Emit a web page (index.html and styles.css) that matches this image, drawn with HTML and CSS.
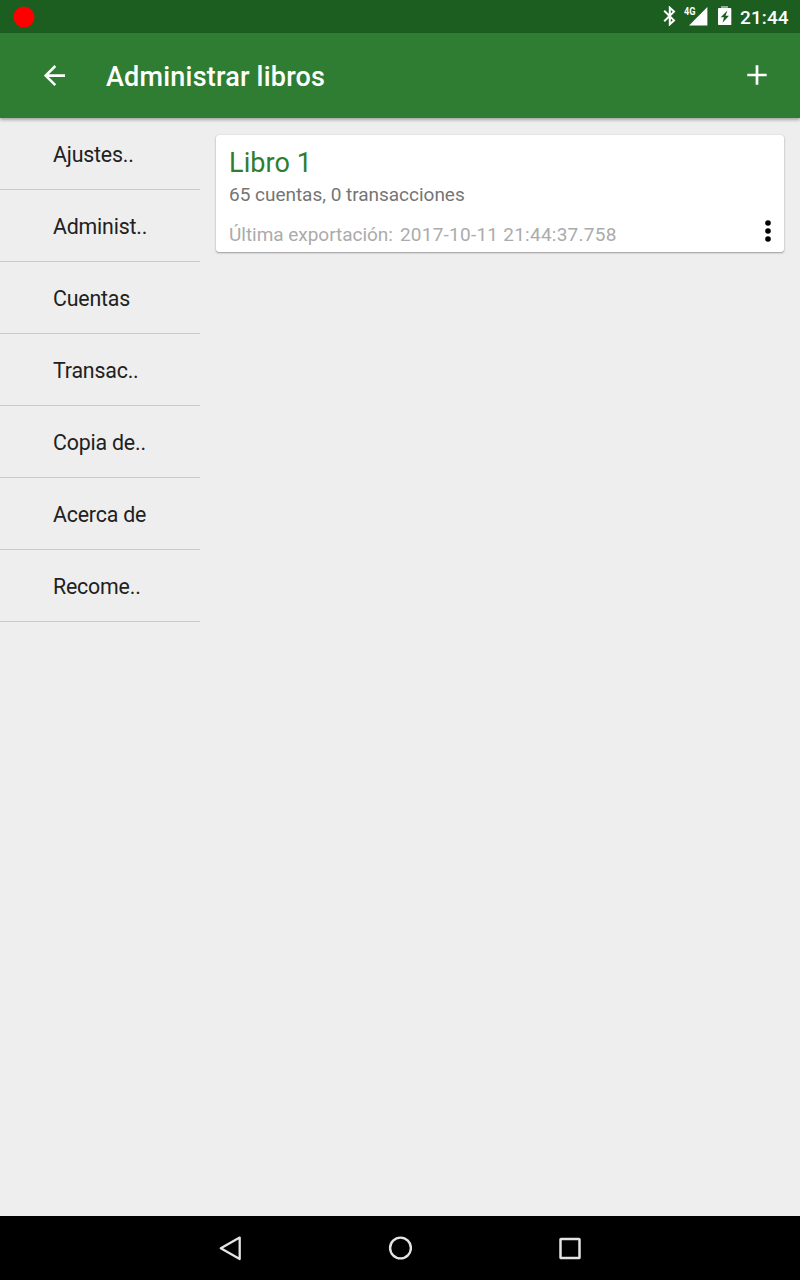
FILE: index.html
```
<!DOCTYPE html>
<html lang="es">
<head>
<meta charset="utf-8">
<title>Administrar libros</title>
<link rel="stylesheet" href="styles.css">
</head>
<body>
<div class="screen">
  <header class="status-bar">
    <svg class="record" width="22" height="22" viewBox="0 0 22 22"><circle cx="11" cy="11" r="10.5" fill="#f00"/></svg>
    <div class="status-icons">
      <svg class="bluetooth" width="14" height="20" viewBox="0 0 14 20"><path d="M1.2 4.7 11 14.4 6.8 18.3V1.7L11 5.6 1.2 15.3" fill="none" stroke="#fff" stroke-width="2"/></svg>
      <svg class="signal" width="25" height="20" viewBox="0 0 25 20"><path d="M23.4 0V18.5H5Z" fill="#fff"/><text class="network" x="0" y="8" textLength="11.5" lengthAdjust="spacingAndGlyphs">4G</text></svg>
      <svg class="battery" width="14" height="20" viewBox="0 0 14 20"><path d="M3 0h7v2H3z" fill="#8eae90"/><path d="M1 2h11.5q.8 0 .8 1v16H.8q-.8 0-.8-1V3q0-1 1-1Z" fill="#fff"/><path d="M9.5 4.5 2.7 11.3H6L4.5 16.7 11 9.7H7.5Z" fill="#1b5e20"/></svg>
      <span class="clock">21:44</span>
    </div>
  </header>
  <div class="toolbar">
    <svg class="back" width="22" height="22" viewBox="0 0 22 22"><path d="M21 10.6H2M11.3 1 1.7 10.6l9.6 9.6" fill="none" stroke="#fff" stroke-width="2.6"/></svg>
    <h1 class="title">Administrar libros</h1>
    <svg class="add" width="20" height="20" viewBox="0 0 20 20"><path d="M10 .3V19.7M.3 10H19.7" stroke="#fff" stroke-width="2.7"/></svg>
  </div>
  <div class="content">
    <nav class="menu">
      <a class="menu-item">Ajustes..</a>
      <a class="menu-item">Administ..</a>
      <a class="menu-item">Cuentas</a>
      <a class="menu-item">Transac..</a>
      <a class="menu-item">Copia de..</a>
      <a class="menu-item">Acerca de</a>
      <a class="menu-item">Recome..</a>
    </nav>
    <main class="books">
      <article class="card">
        <h2 class="book-name">Libro 1</h2>
        <p class="book-stats">65 cuentas, 0 transacciones</p>
        <div class="export-row">
          <span class="export-label">Última exportación:</span>
          <span class="export-date">2017-10-11 21:44:37.758</span>
          <svg class="more" width="6" height="22" viewBox="0 0 6 22"><circle cx="3" cy="3" r="2.8"/><circle cx="3" cy="11" r="2.8"/><circle cx="3" cy="19" r="2.8"/></svg>
        </div>
      </article>
    </main>
  </div>
  <footer class="nav-bar">
    <svg class="nav-back" width="24" height="26" viewBox="0 0 24 26"><path d="M21.7 2.6V24L2.8 13.3Z" fill="none" stroke="#e4e4e4" stroke-width="2.3" stroke-linejoin="round"/></svg>
    <svg class="nav-home" width="24" height="24" viewBox="0 0 24 24"><circle cx="12.5" cy="12" r="10.4" fill="none" stroke="#e4e4e4" stroke-width="2.4"/></svg>
    <svg class="nav-recent" width="22" height="23" viewBox="0 0 22 23"><rect x="1.5" y="2" width="19" height="19" rx=".6" fill="none" stroke="#e4e4e4" stroke-width="2.5"/></svg>
  </footer>
</div>
</body>
</html>
```
FILE: styles.css
```
body, h1, h2, p { margin: 0; }
body { font-family: Roboto, sans-serif; background: #eee; }
.screen { width: 800px; height: 1280px; display: flex; flex-direction: column; background: #eee; overflow: hidden; }
svg { display: block; flex: none; }

.status-bar { height: 33px; flex: none; display: flex; justify-content: space-between; align-items: flex-start; background: #1b5e20; color: #fff; }
.record { margin: 6px 0 0 13px; }
.status-icons { display: flex; padding-right: 10px; }
.bluetooth { margin: 6px 7px 0 0; }
.signal { margin: 7px 9px 0 0; }
.network { font-size: 10px; font-weight: 700; fill: #fff; }
.battery { margin: 6px 8px 0 0; }
.clock { width: 50px; font-size: 19px; font-weight: 500; line-height: 22px; letter-spacing: .1px; margin-top: 7px; white-space: nowrap; }

.toolbar { height: 85px; flex: none; display: flex; align-items: center; background: #2e7d32; color: #fff; box-shadow: 0 2px 3px rgba(0,0,0,.3); z-index: 1; }
.back { margin-left: 44px; }
.title { margin: 2px 0 0 40px; font-size: 27px; font-weight: 500; line-height: 32px; letter-spacing: .2px; flex: 1; }
.add { margin: 0 33px 1px 0; }

.content { flex: 1; display: flex; align-items: flex-start; }
.menu { width: 200px; flex: none; }
.menu-item { display: flex; align-items: center; box-sizing: border-box; height: 72px; padding: 1px 0 0 53px; border-bottom: 1px solid #cbcbcb; font-size: 21.33px; letter-spacing: -.18px; color: #212121; white-space: nowrap; }

.books { flex: 1; padding: 17px 16px 0; }
.card { height: 117px; box-sizing: border-box; padding: 11px 13px 0; background: #fff; border-radius: 3px; box-shadow: 0 1px 2px rgba(0,0,0,.35), 0 0 1px rgba(0,0,0,.2); }
.book-name { font-size: 27px; font-weight: 400; line-height: 34px; letter-spacing: .1px; color: #2e7d32; }
.book-stats { font-size: 19px; line-height: 22px; letter-spacing: -.02px; margin-top: 4px; color: #757575; }
.export-row { display: flex; align-items: flex-start; margin-top: 18px; font-size: 19px; line-height: 22px; color: #ababab; white-space: nowrap; }
.export-label { letter-spacing: -.03px; }
.export-date { margin-left: 7px; flex: 1; letter-spacing: .25px; }
.more { margin-top: -4px; }

.nav-bar { height: 64px; flex: none; display: flex; align-items: center; background: #000; }
.nav-back { margin-left: 218px; }
.nav-home { margin-left: 146px; }
.nav-recent { margin-left: 147px; }
```
